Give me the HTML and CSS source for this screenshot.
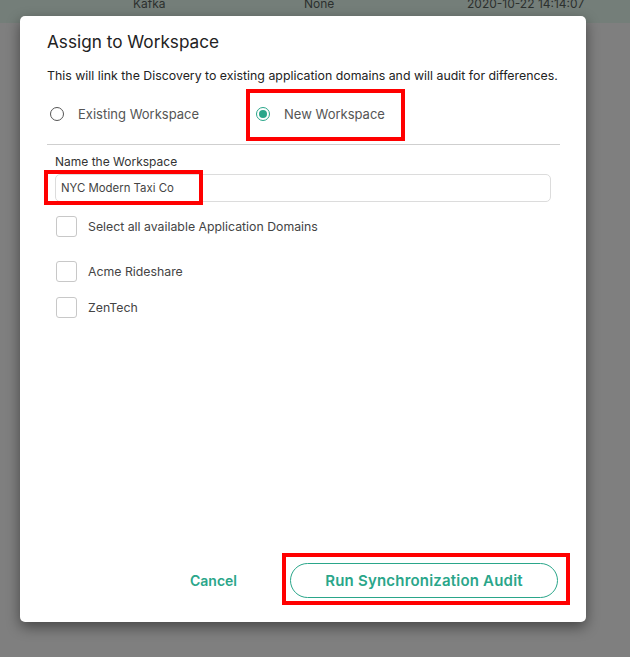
FILE: index.html
```html
<!DOCTYPE html>
<html>
<head>
<meta charset="utf-8">
<link rel="stylesheet" href="styles.css">
</head>
<body>
<div class="backdrop">
  <div class="table-row">
    <span>Kafka</span><span>None</span><span>2020-10-22 14:14:07</span>
  </div>
</div>
<div class="modal">
  <h2 class="title">Assign to Workspace</h2>
  <p class="desc">This will link the Discovery to existing application domains and will audit for differences.</p>
  <div class="radios">
    <div class="radio"><span class="circle"></span>Existing Workspace</div>
    <div class="radio checked"><span class="circle"></span>New Workspace</div>
  </div>
  <div class="divider"></div>
  <div class="form">
    <div class="field-label">Name the Workspace</div>
    <div class="input">NYC Modern Taxi Co</div>
    <div class="check select-all"><span class="box"></span>Select all available Application Domains</div>
    <div class="check"><span class="box"></span>Acme Rideshare</div>
    <div class="check"><span class="box"></span>ZenTech</div>
  </div>
  <div class="footer">
    <button class="btn cancel">Cancel</button>
    <button class="btn run">Run Synchronization Audit</button>
  </div>
  <div class="mark mark-radio"></div>
  <div class="mark mark-input"></div>
  <div class="mark mark-button"></div>
</div>
</body>
</html>
```

FILE: styles.css
```css
* { box-sizing: border-box; }
html, body {
  margin: 0;
  padding: 0;
}
body {
  width: 630px;
  height: 657px;
  background: #7f7f7f;
  font-family: Inter, "Noto Sans", sans-serif;
  overflow: hidden;
}
.backdrop {
  height: 657px;
}
.table-row {
  height: 23px;
  background: #747e79;
  display: grid;
  grid-template-columns: 171px 163px 1fr;
  padding-left: 133px;
  font-size: 12px;
  line-height: 12px;
  color: #2c302e;
  overflow: hidden;
}
.table-row span {
  margin-top: -2px;
}
.modal {
  position: absolute;
  left: 20px;
  top: 16px;
  width: 566px;
  height: 606px;
  background: #fff;
  border-radius: 5px;
  box-shadow: 0 5px 14px rgba(0, 0, 0, 0.45);
  padding: 14px 26px 24px 27px;
  display: flex;
  flex-direction: column;
}
.title {
  margin: 0;
  font-size: 17.2px;
  line-height: 24px;
  font-weight: 400;
  color: #222;
}
.desc {
  margin: 13px 0 0;
  font-size: 12.35px;
  line-height: 18px;
  color: #222;
  white-space: nowrap;
}
.radios {
  display: flex;
  height: 38px;
  align-items: center;
  margin-top: 10px;
  padding-left: 3px;
}
.radio {
  display: flex;
  align-items: center;
  font-size: 13px;
  color: #555;
  gap: 14px;
}
.radio + .radio {
  margin-left: 57px;
}
.circle {
  width: 14px;
  height: 14px;
  border: 1px solid #555;
  border-radius: 50%;
  display: flex;
  align-items: center;
  justify-content: center;
}
.radio.checked .circle {
  border-color: #2aa68a;
}
.radio.checked .circle::after {
  content: "";
  width: 8px;
  height: 8px;
  border-radius: 50%;
  background: #2aa68a;
}
.divider {
  margin-top: 11px;
  height: 1px;
  background: #cfcfcf;
}
.form {
  padding: 0 9px 0 8px;
  display: flex;
  flex-direction: column;
}
.field-label {
  margin-top: 9px;
  font-size: 12px;
  line-height: 16px;
  color: #333;
}
.input {
  margin-top: 4px;
  height: 28px;
  border: 1px solid #dcdcdc;
  border-radius: 5px;
  font-size: 11.4px;
  line-height: 26px;
  padding-left: 5px;
  color: #444;
}
.check {
  display: flex;
  align-items: center;
  gap: 11px;
  height: 22px;
  font-size: 12.3px;
  color: #444;
  margin-top: 14px;
  padding-left: 1px;
}
.check.select-all {
  margin-top: 13px;
  margin-bottom: 9px;
}
.box {
  width: 21px;
  height: 21px;
  border: 1px solid #c8c8c8;
  border-radius: 3px;
}
.footer {
  margin-top: auto;
  display: flex;
  justify-content: flex-end;
  align-items: center;
  padding-right: 2px;
}
.btn {
  font-family: inherit;
  background: none;
  border: none;
  color: #2aa68a;
  font-weight: 600;
  cursor: pointer;
}
.cancel {
  font-size: 14px;
  padding: 0;
  margin-right: 53px;
}
.run {
  font-size: 15px;
  letter-spacing: 0.2px;
  width: 268px;
  height: 35px;
  border: 1px solid #2aa68a;
  border-radius: 18px;
}
.mark {
  position: absolute;
  border: 4px solid #ff0000;
}
.mark-radio {
  left: 226px;
  top: 73px;
  width: 159px;
  height: 52px;
}
.mark-input {
  left: 24px;
  top: 154px;
  width: 159px;
  height: 35px;
}
.mark-button {
  left: 262px;
  top: 537px;
  width: 288px;
  height: 52px;
}
```
